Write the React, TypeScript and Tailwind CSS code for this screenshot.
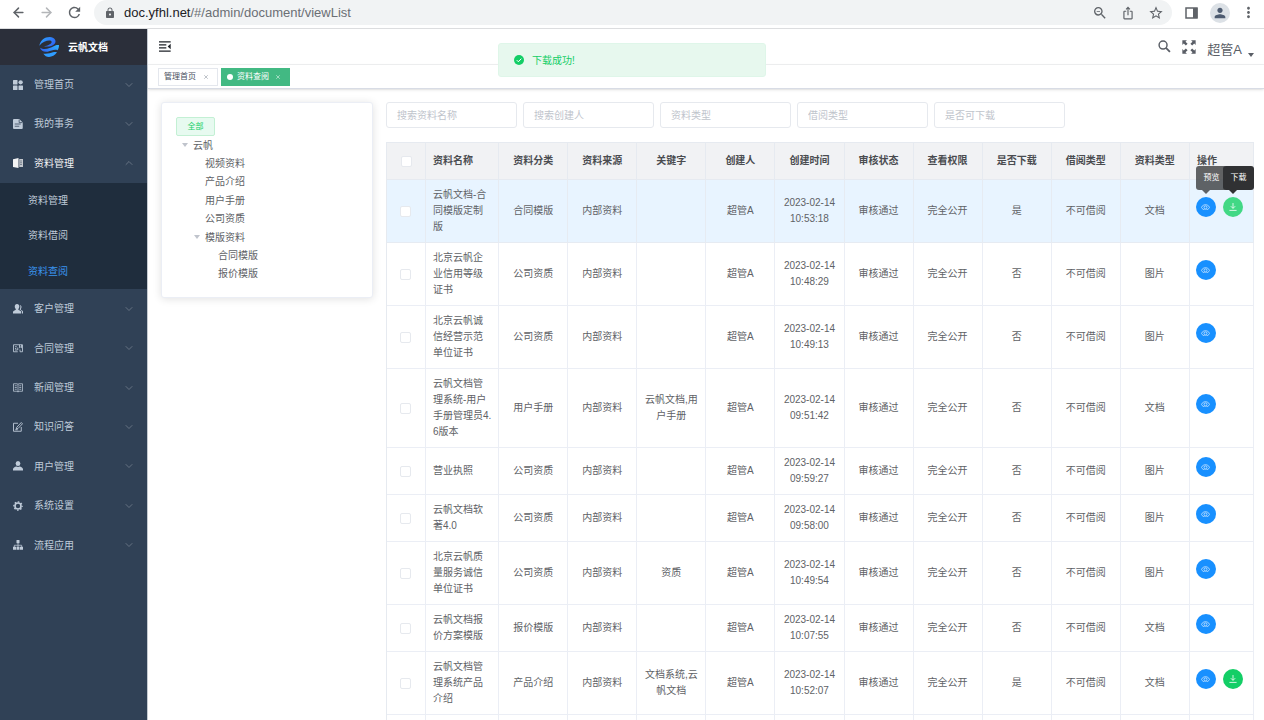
import React from "react";
import { ArrowLeft, ArrowRight, ChevronDown, ChevronUp, X } from "lucide-react";
import {
  MdLock,
  MdMoreVert,
  MdOutlineZoomOut,
  MdPerson,
  MdRefresh,
  MdStarBorder,
  MdOutlineIosShare,
} from "react-icons/md";

type IconProps = { className?: string };

const GridIcon = ({ className }: IconProps) => (
  <svg viewBox="0 0 20 20" fill="currentColor" className={className}>
    <rect x="0" y="0" width="9" height="9" rx="1" />
    <circle cx="15.3" cy="4.6" r="4.3" />
    <rect x="0" y="11" width="9" height="9" rx="1" />
    <rect x="11" y="11" width="9" height="9" rx="1" />
  </svg>
);

const DocIcon = ({ className }: IconProps) => (
  <svg viewBox="0 0 20 20" className={className}>
    <path fill="currentColor" d="M2 0h10.500l7 7v11a2 2 0 0 1-2 2H2a2 2 0 0 1-2-2V2a2 2 0 0 1 2-2z" />
    <path stroke="#304156" strokeWidth="1.500" fill="none" d="M12.300 1v6.200h6.500M3.500 10h12M3.500 14.500h9" />
  </svg>
);

const BookIcon = ({ className }: IconProps) => (
  <svg viewBox="0 0 20 20" className={className}>
    <path fill="currentColor" d="M0 2.500 11 0v20L0 18z" />
    <path fill="currentColor" opacity="0.75" d="M12.500 2H20v16h-7.500z" />
    <path stroke="#304156" strokeWidth="1" d="M14 6h4M14 9.500h4M14 13h4" />
  </svg>
);

const PeopleIcon = ({ className }: IconProps) => (
  <svg viewBox="0 0 20 20" fill="currentColor" className={className}>
    <path d="M8 0c3 0 4.600 2.200 4.600 5 0 2-.8 3.800-1.900 4.900v1.500l4.500 2.600c.8.500 1.200 1.200 1.200 2.200V19H0v-2.800c0-1 .4-1.700 1.200-2.200l4.400-2.600V9.900C4.400 8.800 3.500 7 3.500 5 3.500 2.200 5 0 8 0z" />
    <path d="M13.500 1.800c2.300.1 3.500 1.900 3.500 4.200 0 1.500-.5 2.900-1.300 3.800v1.600l3.300 2.300c.7.500 1 1.100 1 2V19h-2v-3c0-1.400-.6-2.500-1.800-3.200l-3-1.900c1-1.500 1.700-3.300 1.700-5.400 0-1.400-.5-2.800-1.400-3.700z" />
  </svg>
);

const ContractIcon = ({ className }: IconProps) => (
  <svg viewBox="0 0 20 20" fill="none" stroke="currentColor" strokeWidth="1.700" className={className}>
    <path d="M9.500 17.500H1v-14h18v14h-5" />
    <path d="M4 7.500h3.500M4 11h2.500M4 14h5M9.500 9v5M13 3.500v6l2-1.500 2 1.500v-6M14 13v4.500" />
  </svg>
);

const ReadingIcon = ({ className }: IconProps) => (
  <svg viewBox="0 0 20 20" fill="none" stroke="currentColor" strokeWidth="1.500" className={className}>
    <path d="M1 1.500h7l2 1 2-1h7v15h-7l-2 1.500-2-1.500H1zM10 2.500V18" />
    <path d="M3.500 5.500h4M3.500 9h4M3.500 12.500h4M12.500 5.500h4M12.500 9h4M12.500 12.500h4" />
  </svg>
);

const EditIcon = ({ className }: IconProps) => (
  <svg viewBox="0 0 20 20" fill="none" stroke="currentColor" strokeWidth="1.800" className={className}>
    <path d="M10 2.500H1v16h15.500V10" />
    <path d="m16.500 1 2.500 2.500-9 9.500-3.500 1 1-3.500zM4.500 15.500h5" />
  </svg>
);

const UserIcon = ({ className }: IconProps) => (
  <svg viewBox="0 0 20 20" fill="currentColor" className={className}>
    <ellipse cx="10" cy="5" rx="4.700" ry="5" />
    <path d="M0 19v-2.500c0-3 3.500-4.500 7-5.300 1.800 1 4.200 1 6 0 3.500.8 7 2.300 7 5.300V19z" />
  </svg>
);

const GearIcon = ({ className }: IconProps) => (
  <svg viewBox="0 0 20 20" fill="none" stroke="currentColor" className={className}>
    <circle cx="10" cy="10" r="6" strokeWidth="3.200" />
    <circle cx="10" cy="10" r="8.300" strokeWidth="2.600" strokeDasharray="3.260 3.260" strokeDashoffset="1.600" />
  </svg>
);

const TreeIcon = ({ className }: IconProps) => (
  <svg viewBox="0 0 20 20" fill="currentColor" className={className}>
    <rect x="7" y="0" width="6" height="6.500" rx="1" />
    <rect x="0" y="13.500" width="6" height="6" />
    <rect x="7" y="13.500" width="6" height="6" />
    <rect x="14" y="13.500" width="6" height="6" />
    <path fill="none" stroke="currentColor" strokeWidth="1.500" d="M10 6v8M2.700 14v-3.500h14.600V14" />
  </svg>
);

const LogoIcon = ({ className }: IconProps) => (
  <svg viewBox="0 0 60 60" className={className}>
    <defs>
      <linearGradient id="wave" x1="0" y1="0" x2="1" y2="0.6">
        <stop offset="0" stopColor="#2fa8ff" />
        <stop offset="1" stopColor="#2f66f5" />
      </linearGradient>
      <linearGradient id="swell" x1="0" y1="0.6" x2="1" y2="0.2">
        <stop offset="0" stopColor="#2f66f5" />
        <stop offset="1" stopColor="#2fb0ff" />
      </linearGradient>
    </defs>
    <path fill="url(#wave)" d="M1 26C4 10 17 0 32 0c15 1 22 12 15 20-6 7-19 10-32 8 11-2 24-8 23-14-2-7-24-4-37 12z" />
    <path fill="url(#swell)" d="M3 32c12 8 30 2 41-4 6-4 11-5 16-4 0 6-1 11-4 16-10-4-18 1-30 4-11 2-20-3-23-12z" />
    <path fill="#2f9dff" d="M13 50c12 2 21-2 29-4 5-1 8-1 12 0-6 9-15 14-24 14-7 0-13-4-17-10z" />
  </svg>
);

const FoldIcon = ({ className }: IconProps) => (
  <svg viewBox="0 0 36 32" stroke="currentColor" strokeWidth="3.500" className={className}>
    <path d="M0 2h35M0 11h22M0 20h22M0 30h35" />
    <path d="M35 8v16l-9-8z" fill="currentColor" stroke="none" />
  </svg>
);

const SearchIcon = ({ className }: IconProps) => (
  <svg viewBox="0 0 36 36" fill="none" stroke="currentColor" strokeWidth="4" className={className}>
    <circle cx="14" cy="14" r="11" />
    <path strokeWidth="5" d="m22 22 11 11" />
  </svg>
);

const FullscreenIcon = ({ className }: IconProps) => (
  <svg viewBox="0 0 40 40" fill="currentColor" className={className}>
    <path d="M1 1h13l-4 4 6 6-5 5-6-6-4 4zM39 1v13l-4-4-6 6-5-5 6-6-4-4zM1 39V26l4 4 6-6 5 5-6 6 4 4zM39 39H26l4-4-6-6 5-5 6 6 4-4z" />
  </svg>
);

const EyeIcon = () => (
  <svg viewBox="0 0 24 18" fill="none" stroke="currentColor" strokeWidth="2" className="w-[9px]">
    <path d="M1 9c5-9.500 17-9.500 22 0-5 9.500-17 9.500-22 0z" />
    <circle cx="12" cy="9" r="4" />
  </svg>
);

const DownloadIcon = () => (
  <svg viewBox="0 0 20 20" fill="none" stroke="currentColor" strokeWidth="2.200" className="size-2">
    <path d="M10 0v13M4.500 8l5.500 5.500L15.500 8M1 18.500h18" />
  </svg>
);

type NavItem = { label: string; icon: (p: IconProps) => React.ReactElement; open?: boolean };

const topNav: NavItem[] = [
  { label: "管理首页", icon: GridIcon },
  { label: "我的事务", icon: DocIcon },
  { label: "资料管理", icon: BookIcon, open: true },
];

const subNav = ["资料管理", "资料借阅", "资料查阅"];

const bottomNav: NavItem[] = [
  { label: "客户管理", icon: PeopleIcon },
  { label: "合同管理", icon: ContractIcon },
  { label: "新闻管理", icon: ReadingIcon },
  { label: "知识问答", icon: EditIcon },
  { label: "用户管理", icon: UserIcon },
  { label: "系统设置", icon: GearIcon },
  { label: "流程应用", icon: TreeIcon },
];

const NavButton = ({ label, icon: Icon, open }: NavItem) => (
  <button
    type="button"
    className={
      open
        ? "flex w-full items-center pr-3 pl-[13px] text-[#f4f4f5]"
        : "flex w-full items-center pr-3 pl-[13px] text-[#bfcbd9]"
    }
  >
    <Icon className="size-[10px]" />
    <span className="ml-[11px] flex-1 text-left">{label}</span>
    {open ? (
      <ChevronUp className="size-3 text-[#6f7b8a]" strokeWidth={1.7} />
    ) : (
      <ChevronDown className="size-3 text-[#6f7b8a]" strokeWidth={1.7} />
    )}
  </button>
);

const Sidebar = () => (
  <aside className="w-[148px] shrink-0 border-r border-[#c4cad1] bg-[#304156]">
    <div className="flex h-9 items-center bg-[#2b2f3a] pl-[39px] text-white">
      <LogoIcon className="size-5" />
      <h1 className="ml-[9px] font-bold">云帆文档</h1>
    </div>
    <nav>
      <div className="grid h-[118px] auto-rows-fr">
        {topNav.map((item) => (
          <NavButton key={item.label} {...item} />
        ))}
      </div>
      <div className="grid h-[106px] auto-rows-fr bg-[#1f2d3d]">
        {subNav.map((label) => (
          <a
            key={label}
            href="#"
            className={
              label === "资料查阅"
                ? "flex items-center pl-7 text-[#3a94ee]"
                : "flex items-center pl-7 text-[#bfcbd9]"
            }
          >
            {label}
          </a>
        ))}
      </div>
      <div className="grid h-[276px] auto-rows-fr">
        {bottomNav.map((item) => (
          <NavButton key={item.label} {...item} />
        ))}
      </div>
    </nav>
  </aside>
);

const BrowserBar = () => (
  <div className="flex h-[29px] items-start border-b border-[#dcdddf] bg-white text-[#5f6368]">
    <div className="flex h-[25px] w-[94px] shrink-0 items-center pl-[11px]">
      <button type="button" aria-label="后退">
        <ArrowLeft className="size-[15px]" strokeWidth={2.4} />
      </button>
      <button type="button" aria-label="前进" className="ml-[13px] text-[#b4b6b9]">
        <ArrowRight className="size-[15px]" strokeWidth={2.4} />
      </button>
      <button type="button" aria-label="刷新" className="ml-[12px]">
        <MdRefresh className="size-[17px]" />
      </button>
    </div>
    <div className="flex h-[25px] flex-1 items-center rounded-full bg-[#f1f3f4] pr-2 pl-[10px]">
      <MdLock className="size-3" />
      <span className="ml-2 flex-1 text-[13px] text-[#6b6f74]">
        <span className="text-[#202124]">doc.yfhl.net</span>/#/admin/document/viewList
      </span>
      <button type="button" aria-label="缩小">
        <MdOutlineZoomOut className="size-4" />
      </button>
      <button type="button" aria-label="分享" className="ml-[13px]">
        <MdOutlineIosShare className="size-[14px]" />
      </button>
      <button type="button" aria-label="收藏" className="ml-[13px]">
        <MdStarBorder className="size-4" />
      </button>
    </div>
    <div className="flex h-[25px] w-[92px] shrink-0 items-center pl-[13px]">
      <button type="button" aria-label="侧边栏">
        <svg viewBox="0 0 13 12" className="h-3 w-[13px]">
          <rect x="1" y="1" width="11" height="10" fill="none" stroke="currentColor" strokeWidth="1.500" />
          <rect x="8" y="1" width="4.500" height="10" fill="currentColor" />
        </svg>
      </button>
      <button
        type="button"
        aria-label="个人资料"
        className="ml-3 flex size-5 items-center justify-center rounded-full bg-[#dce1e6] text-[#4d5b70]"
      >
        <MdPerson className="size-4" />
      </button>
      <button type="button" aria-label="更多" className="ml-[10px]">
        <MdMoreVert className="size-[17px]" />
      </button>
    </div>
  </div>
);

const Header = () => (
  <header>
    <div className="flex h-9 items-center border-b border-[#f0f1f2] pr-[10px] pl-[11px]">
      <button type="button" aria-label="折叠菜单" className="text-[#1f2329]">
        <FoldIcon className="h-[11px] w-3" />
      </button>
      <div className="ml-auto flex items-center text-[#5a5e66]">
        <button type="button" aria-label="搜索">
          <SearchIcon className="size-[13px]" />
        </button>
        <button type="button" aria-label="全屏" className="ml-[11px]">
          <FullscreenIcon className="size-[14px]" />
        </button>
        <button type="button" className="ml-[11px] flex items-end pt-[6px] text-[13px] leading-[18px]">
          超管A
          <svg viewBox="0 0 6 4" className="mb-[2px] ml-[6px] h-1 w-[6px]">
            <path d="M0 0h6L3 4z" fill="currentColor" />
          </svg>
        </button>
      </div>
    </div>
    <div className="flex h-6 items-center gap-[3px] border-b border-[#d8dce5] pl-[10px] text-[8px] shadow-sm">
      <div className="flex h-[18px] items-center border border-[#e4e7ed] pr-[8px] pl-[5px] text-[#495060]">
        <a href="#">管理首页</a>
        <button type="button" aria-label="关闭管理首页" className="ml-[7px] text-[#7f8693]">
          <X className="size-[6px]" />
        </button>
      </div>
      <div className="flex h-[18px] items-center bg-[#42b983] pr-[9px] pl-[6px] text-white">
        <span className="mr-1 size-[6px] rounded-full bg-white" />
        <a href="#">资料查阅</a>
        <button type="button" aria-label="关闭资料查阅" className="ml-[6px]">
          <X className="size-[6px]" />
        </button>
      </div>
    </div>
  </header>
);

type TreeNode = { label: string; level: number; parent?: boolean };

const tree: TreeNode[] = [
  { label: "云帆", level: 0, parent: true },
  { label: "视频资料", level: 1 },
  { label: "产品介绍", level: 1 },
  { label: "用户手册", level: 1 },
  { label: "公司资质", level: 1 },
  { label: "模版资料", level: 1, parent: true },
  { label: "合同模版", level: 2 },
  { label: "报价模版", level: 2 },
];

const indents = ["pl-1", "pl-4", "pl-[29px]"];

const CategoryTree = () => (
  <section className="w-[212px] shrink-0 rounded-[3px] border border-[#ebeef5] bg-white p-[14px] shadow-[0_1px_8px_rgba(0,0,0,0.12)]">
    <button
      type="button"
      className="flex h-[19px] w-[39px] items-center justify-center rounded-[2px] border border-[#c3f0d4] bg-[#e7faf0] text-[8px] text-[#13ce66]"
    >
      全部
    </button>
    <ul className="grid h-[147px] auto-rows-fr text-[#606266]">
      {tree.map(({ label, level, parent }) => (
        <li key={label} className={`flex items-center ${indents[level]}`}>
          <span className="mr-1 flex w-[9px] justify-center">
            {parent && (
              <svg viewBox="0 0 6 4" className="h-1 w-[6px] text-[#c0c4cc]">
                <path d="M0 0h6L3 4z" fill="currentColor" />
              </svg>
            )}
          </span>
          {label}
        </li>
      ))}
    </ul>
  </section>
);

const textFilters = ["搜索资料名称", "搜索创建人"];
const selectFilters = ["资料类型", "借阅类型", "是否可下载"];

const Filters = () => (
  <form className="flex gap-[6px]">
    {textFilters.map((label) => (
      <input
        key={label}
        type="text"
        aria-label={label}
        placeholder={label}
        className="h-[26px] w-[131px] rounded-[3px] border border-[#e6e9ee] px-[10px] placeholder:text-[#c0c4cc]"
      />
    ))}
    {selectFilters.map((label) => (
      <select
        key={label}
        aria-label={label}
        defaultValue=""
        className="h-[26px] w-[131px] appearance-none rounded-[3px] border border-[#e6e9ee] bg-white px-[10px] text-[#c0c4cc]"
      >
        <option value="">{label}</option>
      </select>
    ))}
  </form>
);

type Row = {
  name: string;
  category: string;
  keyword?: string;
  time: string;
  download: string;
  type: string;
  active?: boolean;
};

const rows: Row[] = [
  { name: "云帆文档-合同模版定制版", category: "合同模版", time: "2023-02-14 10:53:18", download: "是", type: "文档", active: true },
  { name: "北京云帆企业信用等级证书", category: "公司资质", time: "2023-02-14 10:48:29", download: "否", type: "图片" },
  { name: "北京云帆诚信经营示范单位证书", category: "公司资质", time: "2023-02-14 10:49:13", download: "否", type: "图片" },
  { name: "云帆文档管理系统-用户手册管理员4.6版本", category: "用户手册", keyword: "云帆文档,用户手册", time: "2023-02-14 09:51:42", download: "否", type: "文档" },
  { name: "营业执照", category: "公司资质", time: "2023-02-14 09:59:27", download: "否", type: "图片" },
  { name: "云帆文档软著4.0", category: "公司资质", time: "2023-02-14 09:58:00", download: "否", type: "图片" },
  { name: "北京云帆质量服务诚信单位证书", category: "公司资质", keyword: "资质", time: "2023-02-14 10:49:54", download: "否", type: "图片" },
  { name: "云帆文档报价方案模版", category: "报价模版", time: "2023-02-14 10:07:55", download: "否", type: "文档" },
  { name: "云帆文档管理系统产品介绍", category: "产品介绍", keyword: "文档系统,云帆文档", time: "2023-02-14 10:52:07", download: "是", type: "文档" },
];

const columns = [
  "资料分类",
  "资料来源",
  "关键字",
  "创建人",
  "创建时间",
  "审核状态",
  "查看权限",
  "是否下载",
  "借阅类型",
  "资料类型",
];

const Checkbox = ({ label }: { label: string }) => (
  <input
    type="checkbox"
    aria-label={label}
    className="mx-auto block size-[11px] appearance-none rounded-[2px] border border-[#e6e9ee] bg-white"
  />
);

const Tooltip = ({ text, dark }: { text: string; dark?: boolean }) => (
  <span
    role="tooltip"
    className={
      dark
        ? "absolute bottom-[27px] left-0 z-20 flex h-6 w-[31px] items-center justify-center rounded-[3px] bg-[#303133] text-[8px] text-white"
        : "absolute bottom-[27px] left-0 z-10 flex h-6 w-[31px] items-center justify-center rounded-[3px] bg-[#303133]/75 text-[8px] text-white"
    }
  >
    {text}
    <svg viewBox="0 0 8 4" className="absolute top-full left-[6px] h-1 w-2">
      <path d="M0 0h8L4 4z" fill="#303133" opacity={dark ? 1 : 0.75} />
    </svg>
  </span>
);

const DocumentTable = () => (
  <table className="mt-[14px] w-full table-fixed border-separate border-spacing-0 border-t border-l border-[#e6eaf0] text-center leading-4 text-[#606266]">
    <colgroup>
      <col className="w-[39px]" />
      <col className="w-[73px]" />
      {columns.map((c) => (
        <col key={c} className="w-[69px]" />
      ))}
      <col className="w-16" />
    </colgroup>
    <thead className="bg-[#f1f2f4] text-[#4a4c50]">
      <tr className="h-[37px] [&>th]:border-r [&>th]:border-b [&>th]:border-[#e6eaf0]">
        <th>
          <Checkbox label="全选" />
        </th>
        <th className="pl-[7px] text-left font-bold">资料名称</th>
        {columns.map((c) => (
          <th key={c} className="font-bold">
            {c}
          </th>
        ))}
        <th className="pl-[7px] text-left font-bold">操作</th>
      </tr>
    </thead>
    <tbody>
      {rows.map((r) => (
        <tr
          key={r.name}
          className={
            r.active
              ? "bg-[#e8f4ff] [&>td]:border-r [&>td]:border-b [&>td]:border-[#e6ebf2] [&>td]:py-[7px]"
              : "[&>td]:border-r [&>td]:border-b [&>td]:border-[#ebeef5] [&>td]:py-[7px]"
          }
        >
          <td className="pr-[2px]">
            <Checkbox label={r.name} />
          </td>
          <td className="pr-[6px] pl-[7px] text-left break-all">{r.name}</td>
          <td>{r.category}</td>
          <td>内部资料</td>
          <td className="px-[7px] break-all">{r.keyword}</td>
          <td>超管A</td>
          <td className="px-[7px]">{r.time}</td>
          <td>审核通过</td>
          <td>完全公开</td>
          <td>{r.download}</td>
          <td>不可借阅</td>
          <td>{r.type}</td>
          <td className="pl-[6px]">
            <div className="mb-2 flex gap-[7px]">
              <div className="relative">
                {r.active && <Tooltip text="预览" />}
                <button
                  type="button"
                  aria-label="预览"
                  className="flex size-5 items-center justify-center rounded-full bg-[#1890ff] text-white/80"
                >
                  <EyeIcon />
                </button>
              </div>
              {r.download === "是" && (
                <div className="relative">
                  {r.active && <Tooltip text="下载" dark />}
                  <button
                    type="button"
                    aria-label="下载"
                    className={
                      r.active
                        ? "flex size-5 items-center justify-center rounded-full bg-[#42d885] text-white/90"
                        : "flex size-5 items-center justify-center rounded-full bg-[#13ce66] text-white/90"
                    }
                  >
                    <DownloadIcon />
                  </button>
                </div>
              )}
            </div>
          </td>
        </tr>
      ))}
      <tr className="h-12 [&>td]:border-r [&>td]:border-b [&>td]:border-[#ebeef5]">
        <td />
        <td />
        {columns.map((c) => (
          <td key={c} />
        ))}
        <td />
      </tr>
    </tbody>
  </table>
);

const Message = () => (
  <div
    role="status"
    className="fixed top-[43px] left-1/2 z-30 flex h-[34px] w-[268px] -translate-x-1/2 items-center rounded-[3px] border border-[#dff6e9] bg-[#e7f8ee] pl-[15px] text-[#13ce66]"
  >
    <svg viewBox="0 0 20 20" className="size-[10px]">
      <circle cx="10" cy="10" r="10" fill="currentColor" />
      <path d="m5.500 10.300 3.200 3.200 6-6.200" fill="none" stroke="#fff" strokeWidth="2" />
    </svg>
    <p className="ml-2">下载成功!</p>
  </div>
);

export default function App() {
  return (
    <div className="flex h-screen flex-col overflow-hidden bg-white font-['Liberation_Sans','Noto_Sans_CJK_SC',sans-serif] text-[10px]">
      <BrowserBar />
      <div className="flex min-h-0 flex-1">
        <Sidebar />
        <div className="flex min-w-0 flex-1 flex-col">
          <Header />
          <main className="flex min-h-0 flex-1 items-start gap-[13px] overflow-hidden pt-[13px] pr-[10px] pl-[13px]">
            <CategoryTree />
            <div className="min-w-0 flex-1">
              <Filters />
              <DocumentTable />
            </div>
          </main>
        </div>
      </div>
      <Message />
    </div>
  );
}
